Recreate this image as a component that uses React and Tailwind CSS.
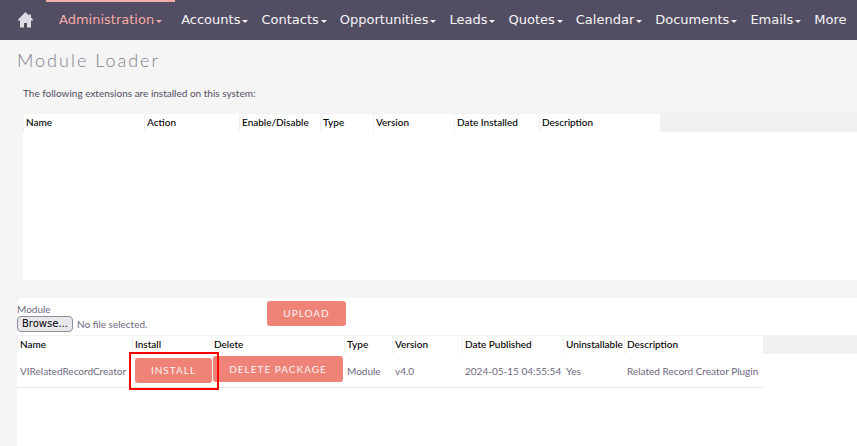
import React from 'react'

const modules = ['Accounts', 'Contacts', 'Opportunities', 'Leads', 'Quotes', 'Calendar', 'Documents', 'Emails']

const installedColumns = [
  { label: 'Name', width: 'w-[121px]' },
  { label: 'Action', width: 'w-[95px]' },
  { label: 'Enable/Disable', width: 'w-[81px]' },
  { label: 'Type', width: 'w-[53px]' },
  { label: 'Version', width: 'w-[81px]' },
  { label: 'Date Installed', width: 'w-[85px]' },
  { label: 'Description', width: 'w-[121px]' },
]

const packageColumns = [
  { label: 'Name', width: 'w-[115px]' },
  { label: 'Install', width: 'w-[79px]' },
  { label: 'Delete', width: 'w-[133px]' },
  { label: 'Type', width: 'w-[48px]' },
  { label: 'Version', width: 'w-[70px]' },
  { label: 'Date Published', width: 'w-[101px]' },
  { label: 'Uninstallable', width: 'w-[61px]' },
  { label: 'Description', width: 'w-[139px]' },
]

const Caret = () => (
  <svg width="6" height="3" viewBox="0 0 6 3" className="ml-[2px] mt-[2px] shrink-0" fill="currentColor">
    <path d="M0 0h6L3 3z" />
  </svg>
)

const ActionButton = ({ children, className }) => (
  <button className={`rounded-[3px] bg-[#f08377] text-[10px] tracking-[1px] text-[#f5f5f5] whitespace-nowrap ${className}`}>
    {children}
  </button>
)

const HeaderRow = ({ columns }) => (
  <thead>
    <tr className="h-[19px]">
      {columns.map((col) => (
        <th
          key={col.label}
          scope="col"
          className={`${col.width} border-t border-l border-[#f1f1f1] bg-white p-0 pb-[2px] pl-[2px] text-left text-[10px] leading-4 font-medium text-black whitespace-nowrap`}
        >
          {col.label}
        </th>
      ))}
    </tr>
  </thead>
)

const Navbar = () => (
  <nav className="flex h-10 items-stretch overflow-hidden bg-[#534d64] font-['DejaVu_Sans',sans-serif] text-[13px] text-[#f5f5f5] whitespace-nowrap">
    <a href="#home" aria-label="Home" className="flex w-[46px] shrink-0 items-center pl-[18px]">
      <svg width="16" height="16" viewBox="0 0 16 16" fill="#dddbe1">
        <path d="M7.5 0L0 7.5v1h2V15.5h4v-4.5h3v4.5h4V8.5h2v-1l-2-2V2.5h-2v1z" />
      </svg>
    </a>
    <a href="#administration" className="mr-[6px] flex shrink-0 items-center border-t-2 border-[#f5aca5] px-[13px] pb-[2px] text-[#f5aca5]">
      Administration
      <Caret />
    </a>
    {modules.map((name) => (
      <a key={name} href={`#${name.toLowerCase()}`} className="mr-[13px] flex shrink-0 items-center">
        {name}
        <Caret />
      </a>
    ))}
    <a href="#more" className="flex shrink-0 items-center">More</a>
  </nav>
)

const InstalledExtensions = () => (
  <section className="ml-[23px] min-h-[167px] bg-white">
    <div className="bg-[#f1f1f1]">
      <table className="w-[637px] table-fixed border-separate border-spacing-0">
        <HeaderRow columns={installedColumns} />
      </table>
    </div>
  </section>
)

const UploadForm = () => (
  <form className="flex h-[37px] items-start">
    <label className="flex w-[250px] flex-col pt-1">
      <span className="leading-[14px]">Module</span>
      <input type="file" className="sr-only" />
      <span className="flex items-center">
        <span className="mr-1 rounded-[4px] border border-[#8f8f9d] bg-[#e9e9ed] px-1 font-['DejaVu_Sans',sans-serif] text-[10px] leading-[14px] text-black">
          Browse...
        </span>
        No file selected.
      </span>
    </label>
    <ActionButton className="mt-[3px] h-[25px] w-[79px]">UPLOAD</ActionButton>
  </form>
)

const Packages = () => (
  <section className="mt-[18px] ml-[17px] flex-1 rounded-tl-[6px] bg-white">
    <UploadForm />
    <div className="bg-[linear-gradient(#f1f1f1_19px,white_19px)]">
      <table className="w-[746px] table-fixed border-separate border-spacing-0">
        <HeaderRow columns={packageColumns} />
        <tbody>
          <tr className="h-[34px] whitespace-nowrap [&>td]:border-b [&>td]:border-[#e5e5e5] [&>td]:p-0 [&>td]:pt-px [&>td]:pl-[3px]">
            <td>VIRelatedRecordCreator</td>
            <td className="relative">
              <ActionButton className="mb-[2px] block h-[25px] w-[77px]">INSTALL</ActionButton>
              <span className="pointer-events-none absolute -top-[2px] -left-[3px] h-[38px] w-[90px] border-2 border-[#ff0000]" />
            </td>
            <td>
              <ActionButton className="-ml-[1px] mb-1 block h-[26px] w-[130px]">DELETE PACKAGE</ActionButton>
            </td>
            <td>Module</td>
            <td>v4.0</td>
            <td>2024-05-15 04:55:54</td>
            <td>Yes</td>
            <td>Related Record Creator Plugin</td>
          </tr>
        </tbody>
      </table>
    </div>
  </section>
)

const App = () => {
  return (
    <div className="flex min-h-screen flex-col overflow-x-hidden bg-[#f5f5f5] font-[Lato,sans-serif] text-[10px] text-[#6d6880]">
      <Navbar />
      <main className="flex flex-1 flex-col">
        <h1 className="pt-2 pl-[17px] text-[18px] leading-6 font-light tracking-[2px] text-[#817c8d]">Module Loader</h1>
        <p className="mt-[13px] mb-3 pl-[23px] leading-4 text-[#534d64]">The following extensions are installed on this system:</p>
        <InstalledExtensions />
        <Packages />
      </main>
    </div>
  )
}

export default App
